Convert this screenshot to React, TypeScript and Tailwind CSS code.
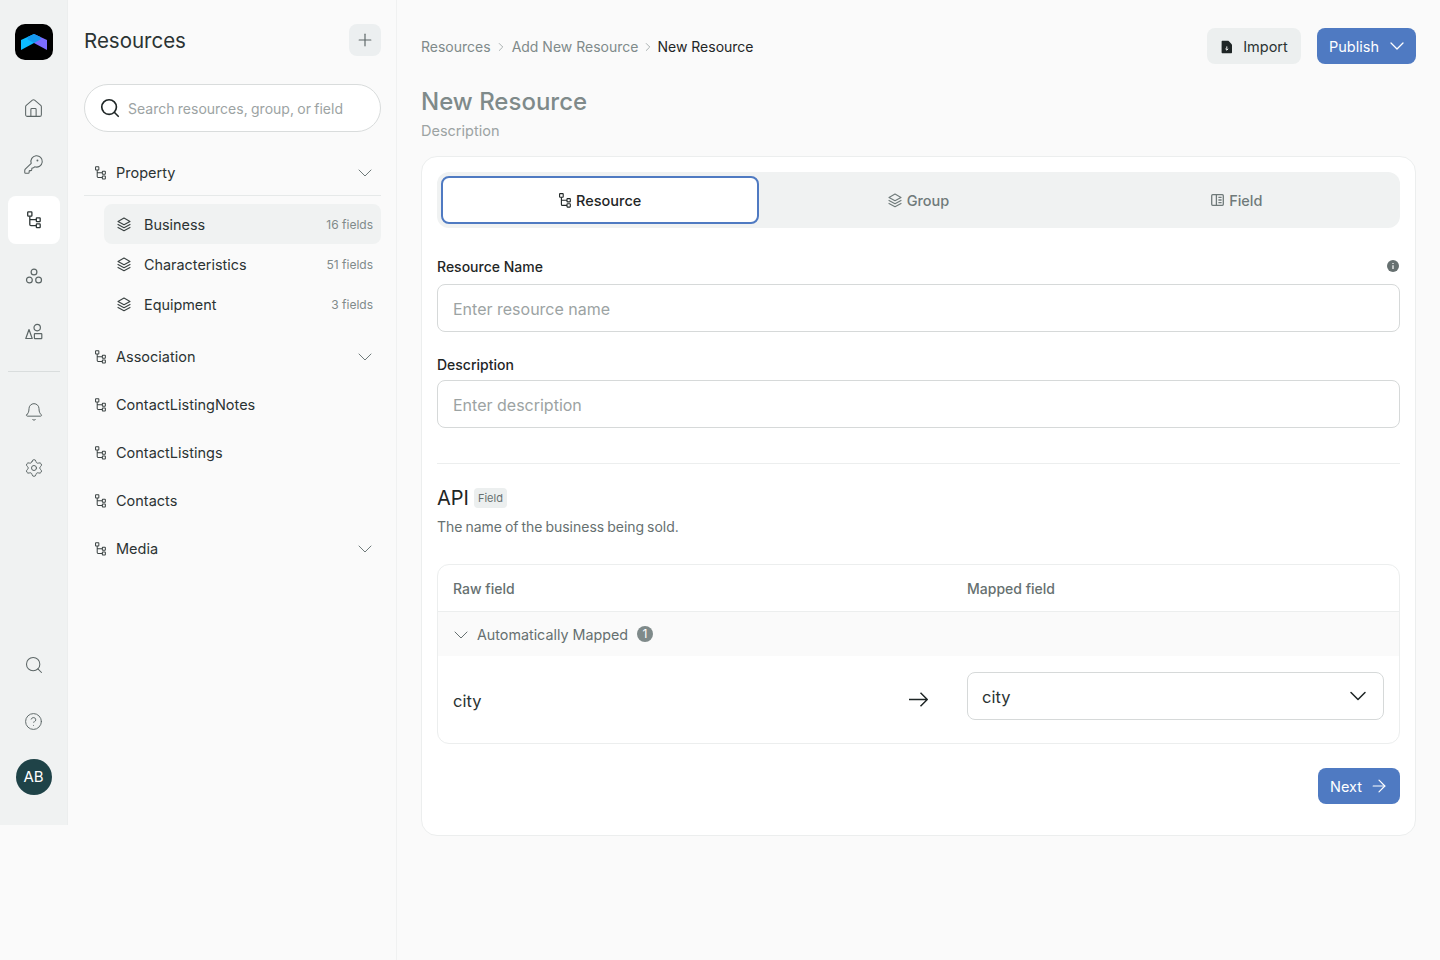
import React from 'react';
import { House, KeyRound, Bell, Settings, Search, CircleHelp, ChevronDown, ChevronRight, Plus, ArrowRight } from 'lucide-react';

const TreeIcon: React.FC<{ className?: string }> = ({ className }) => (
    <svg viewBox="0 0 12 15" fill="none" stroke="currentColor" strokeWidth="1.1" className={className}>
        <rect x="0.6" y="0.6" width="3.6" height="3.6" rx="0.5" />
        <rect x="8" y="5.6" width="3.3" height="3.3" rx="0.5" />
        <rect x="8" y="10.8" width="3.3" height="3.3" rx="0.5" />
        <path d="M2.4 4.2V11.4C2.4 12 2.8 12.4 3.4 12.4H8M2.4 7.2H8" />
    </svg>
);

const LayersIcon = () => (
    <svg viewBox="0 0 14 15" fill="none" stroke="currentColor" strokeWidth="1.1" strokeLinejoin="round" strokeLinecap="round" className="w-[14px] h-[15px] shrink-0">
        <path d="M7 1 13 4.4 7 7.8 1 4.4Z" />
        <path d="M1 7.4 7 10.8 13 7.4" />
        <path d="M1 10.4 7 13.8 13 10.4" />
    </svg>
);

const CirclesIcon = () => (
    <svg viewBox="0 0 18 18" fill="none" stroke="currentColor" strokeWidth="1.2" className="w-[18px] h-[18px]">
        <circle cx="9" cy="5" r="2.9" />
        <circle cx="4.4" cy="13" r="2.9" />
        <circle cx="13.6" cy="13" r="2.9" />
    </svg>
);

const ShapesIcon = () => (
    <svg viewBox="0 0 18 18" fill="none" stroke="currentColor" strokeWidth="1.2" strokeLinejoin="round" className="w-[18px] h-[18px]">
        <path d="M4 6.5 7.2 15.5H0.8Z" />
        <circle cx="12.2" cy="4.6" r="3.2" />
        <rect x="9.4" y="10.6" width="7.4" height="5" rx="0.6" />
    </svg>
);

const FieldIcon = () => (
    <svg viewBox="0 0 13 12" fill="none" stroke="currentColor" strokeWidth="1.3" className="w-[13px] h-[12px]">
        <rect x="0.7" y="0.7" width="11.6" height="10.6" rx="1" />
        <path d="M5.4 0.7V11.3M7.4 3.4H10.6M7.4 6H10.6M7.4 8.6H10.6" />
    </svg>
);

const ImportIcon = () => (
    <svg viewBox="0 0 14 14" className="w-[14px] h-[14px]">
        <path fill="#1f2626" d="M2.6 0.8H8.4L12 4.4V12.2C12 12.8 11.6 13.2 11 13.2H2.6C2 13.2 1.6 12.8 1.6 12.2V1.8C1.6 1.2 2 0.8 2.6 0.8Z" />
        <path fill="none" stroke="#eef0f0" strokeWidth="1" d="M6.8 6.4V10M5.4 8.8 6.8 10.2 8.2 8.8" />
    </svg>
);

// long arrow used between raw and mapped field
const LongArrow = () => (
    <svg viewBox="0 0 19 15" fill="none" stroke="#1f2626" strokeWidth="1.5" className="w-[19px] h-[15px]">
        <path d="M0 7.5H18M11.5 0.7 18.3 7.5 11.5 14.3" />
    </svg>
);

const Logo = () => (
    <div className="w-[38px] h-[36px] rounded-[10px] bg-black flex items-center justify-center">
        <svg viewBox="0 0 26 16" className="w-[26px] h-[16px]">
            <path fill="#0cbcff" d="M0 6 13 0V9L0 16Z" />
            <path fill="#7b6cff" d="M26 6 13 0V9L26 16Z" />
            <path fill="#1499ef" d="M6.5 3 13 0 19.5 3 19.5 5.5 13 9 6.5 5.5Z" />
        </svg>
    </div>
);

const Rail: React.FC = () => (
    <div className="w-[68px] h-[825px] shrink-0 bg-[#f0f2f2] border-r border-[#eceeee] flex flex-col items-center pt-6 text-[#5c6666]">
        <Logo />
        <div className="flex flex-col items-center w-full mt-[20px]">
            <div className="h-14 w-[52px] flex items-center justify-center"><House size={21} strokeWidth={1.2} /></div>
            <div className="h-14 w-[52px] flex items-center justify-center"><KeyRound size={21} strokeWidth={1.2} /></div>
            <div className="h-12 w-[52px] my-1 rounded-lg bg-white flex items-center justify-center text-[#2c3434]"><TreeIcon className="w-[14px] h-[18px]" /></div>
            <div className="h-14 w-[52px] flex items-center justify-center"><CirclesIcon /></div>
            <div className="h-14 w-[52px] flex items-center justify-center"><ShapesIcon /></div>
            <div className="w-[52px] h-px bg-[#d9dddd] mt-[11px] mb-[12px]" />
            <div className="h-14 w-[52px] flex items-center justify-center"><Bell size={20} strokeWidth={1.2} /></div>
            <div className="h-14 w-[52px] flex items-center justify-center"><Settings size={20} strokeWidth={1.2} /></div>
        </div>
        <div className="mt-auto flex flex-col items-center pb-[30px]">
            <div className="h-14 w-[52px] flex items-center justify-center"><Search size={20} strokeWidth={1.25} /></div>
            <div className="h-14 w-[52px] flex items-center justify-center"><CircleHelp size={19} strokeWidth={1.2} /></div>
            <div className="mt-[10px] w-9 h-9 rounded-full bg-[#1f4348] text-white text-[15px] flex items-center justify-center">AB</div>
        </div>
    </div>
);

const ResourceRow: React.FC<{ name: string; expandable?: boolean; border?: boolean }> = ({ name, expandable, border }) => (
    <div className={`h-12 flex items-center pt-0.5 pl-[11px] pr-1 text-[#2b3333] ${border ? 'border-b border-[#e6e9e9]' : ''}`}>
        <TreeIcon className="w-[11px] h-[14px] text-[#3a4242]" />
        <span className="ml-[10px] text-[14.5px]">{name}</span>
        {expandable && <ChevronDown size={24} strokeWidth={1} className="ml-auto text-[#6f7a7a]" />}
    </div>
);

const SubRow: React.FC<{ name: string; count: string; active?: boolean }> = ({ name, count, active }) => (
    <div className={`h-10 flex items-center pl-[13px] pr-2 rounded-lg ${active ? 'bg-[#f0f2f2]' : ''}`}>
        <span className="text-[#3a4242]"><LayersIcon /></span>
        <span className="ml-[13px] pt-0.5 text-[14.4px] text-[#2b3333]">{name}</span>
        <span className="ml-auto pt-0.5 text-[12px] text-[#7f8a8a]">{count}</span>
    </div>
);

const ResourcesPanel: React.FC = () => (
    <div className="w-[329px] shrink-0 min-h-[960px] border-r border-[#f0f1f1] pl-4 pr-[15px] pt-6">
        <div className="flex items-center justify-between h-8">
            <h2 className="pt-0.5 text-[20.5px] text-[#2b3333]">Resources</h2>
            <button className="w-8 h-8 rounded-lg bg-[#eceff0] flex items-center justify-center text-[#5c6666]">
                <Plus size={20} strokeWidth={1.4} />
            </button>
        </div>
        <div className="mt-7 h-12 rounded-full bg-white border border-[#d9dcdc] flex items-center pl-[14px]">
            <Search size={22} strokeWidth={1.8} className="text-[#1f2626]" />
            <span className="ml-[7px] text-[14px] pt-px text-[#9ca3a3] [word-spacing:-0.6px]">Search resources, group, or field</span>
        </div>
        <div className="mt-4">
            <ResourceRow name="Property" expandable border />
            <div className="pl-5 pt-2 pb-2">
                <SubRow name="Business" count="16 fields" active />
                <SubRow name="Characteristics" count="51 fields" />
                <SubRow name="Equipment" count="3 fields" />
            </div>
            <ResourceRow name="Association" expandable />
            <ResourceRow name="ContactListingNotes" />
            <ResourceRow name="ContactListings" />
            <ResourceRow name="Contacts" />
            <ResourceRow name="Media" expandable />
        </div>
    </div>
);

const Tab: React.FC<{ label: string; icon: React.ReactNode; active?: boolean }> = ({ label, icon, active }) => (
    <div className={`w-1/3 h-12 flex items-center justify-center gap-[5px] text-[14.5px] font-medium rounded-lg ${active ? 'bg-white border-2 border-[#4f7ac2] text-[#1f2626]' : 'text-[#6f7a7a]'}`}>
        {icon}
        <span className="pt-0.5">{label}</span>
    </div>
);

const Field: React.FC<{ label: string; placeholder: string; info?: boolean; gap: string }> = ({ label, placeholder, info, gap }) => (
    <div>
        <div className={`flex items-center justify-between h-4 ${gap}`}>
            <label className="pb-0.5 text-[14px] font-medium text-[#1f2626]">{label}</label>
            {info && (
                <svg viewBox="0 0 12 12" className="w-3 h-3 mr-px -mt-0.5">
                    <circle cx="6" cy="6" r="6" fill="#667070" />
                    <path d="M6 5.2V9M6 3V4" stroke="#fff" strokeWidth="1.2" />
                </svg>
            )}
        </div>
        <div className="h-12 pt-0.5 rounded-lg border border-[#d6d9d9] bg-white flex items-center px-[15px] text-[16px] text-[#9ca3a3]">{placeholder}</div>
    </div>
);

const MappingTable: React.FC = () => (
    <div className="mt-[27px] rounded-xl border border-[#eceeee] overflow-hidden">
        <div className="h-[47px] flex items-center border-b border-[#eceeee] px-[15px] text-[14px] font-medium text-[#667070]">
            <span className="w-[514px]">Raw field</span>
            <span>Mapped field</span>
        </div>
        <div className="h-[44px] pt-0.5 bg-[#fafafa] flex items-center pl-[11px] text-[14.3px] text-[#667070]">
            <ChevronDown size={24} strokeWidth={1} />
            <span className="ml-1">Automatically Mapped</span>
            <span className="ml-[9px] -mt-0.5 w-4 h-4 rounded-full bg-[#7f8a8a] text-white text-[12px] flex items-center justify-center">1</span>
        </div>
        <div className="h-[87px] flex items-start px-[15px] pt-4">
            <span className="w-[456px] mt-[17px] text-[16.5px] text-[#2b3333]">city</span>
            <div className="mt-5"><LongArrow /></div>
            <div className="ml-[39px] w-[417px] h-12 rounded-lg border border-[#d6d9d9] flex items-center justify-between pl-[14px] pr-[11px] text-[16.5px] text-[#2b3333]">
                <span className="pt-[3px]">city</span>
                <ChevronDown size={28} strokeWidth={1.3} className="text-[#1f2626]" />
            </div>
        </div>
    </div>
);

const App: React.FC = () => {
    return (
        <div className="flex min-h-[960px] bg-[#fafafa] font-['Inter',sans-serif]">
            <Rail />
            <ResourcesPanel />
            <main className="flex-1 min-w-0 px-6 pt-7">
                <div className="flex items-center h-9">
                    <nav className="flex items-center pt-px text-[14px] text-[#7f8a8a]">
                        <span>Resources</span>
                        <ChevronRight size={14} strokeWidth={1.1} className="mx-[3.5px]" />
                        <span>Add New Resource</span>
                        <ChevronRight size={14} strokeWidth={1.1} className="mx-[2.5px]" />
                        <span className="text-[#1f2626]">New Resource</span>
                    </nav>
                    <button className="ml-auto h-9 w-[94px] pt-0.5 rounded-lg bg-[#ecefef] flex items-center justify-center gap-[9px] text-[14.5px] text-[#2b3333]">
                        <ImportIcon />
                        Import
                    </button>
                    <button className="ml-4 h-9 w-[99px] pl-3 rounded-lg bg-[#4f7ac2] flex items-center gap-[6px] text-[14.5px] text-white">
                        <span className="pt-0.5">Publish</span>
                        <ChevronDown size={24} strokeWidth={1.3} />
                    </button>
                </div>
                <h1 className="mt-5 text-[24px] leading-[36px] font-medium text-[#7f8a8a]">New Resource</h1>
                <p className="mt-px text-[14.5px] leading-5 text-[#9ca3a3]">Description</p>
                <section className="mt-[15px] h-[680px] rounded-2xl border border-[#eceeee] bg-white p-[15px]">
                    <div className="h-14 rounded-xl bg-[#f0f2f2] p-1 flex">
                        <Tab label="Resource" active icon={<TreeIcon className="w-[12px] h-[15px]" />} />
                        <Tab label="Group" icon={<LayersIcon />} />
                        <Tab label="Field" icon={<FieldIcon />} />
                    </div>
                    <div className="mt-[31px]">
                        <Field label="Resource Name" placeholder="Enter resource name" info gap="mb-[9px]" />
                    </div>
                    <div className="mt-[25px]">
                        <Field label="Description" placeholder="Enter description" gap="mb-[7px]" />
                    </div>
                    <div className="mt-[35px] h-px bg-[#eceeee]" />
                    <div className="mt-[23px] flex items-center h-[22px]">
                        <span className="text-[20px] text-[#1f2626]">API</span>
                        <span className="ml-[5px] h-5 px-1 rounded bg-[#ecefef] text-[11px] text-[#667070] flex items-center">Field</span>
                    </div>
                    <p className="mt-2 text-[14px] leading-5 text-[#667070] [word-spacing:-1px]">The name of the business being sold.</p>
                    <MappingTable />
                    <div className="mt-6 flex justify-end">
                        <button className="h-9 w-[82px] pl-3 rounded-lg bg-[#4f7ac2] text-white text-[14.5px] flex items-center gap-[7px]">
                            <span className="pt-0.5">Next</span>
                            <ArrowRight size={20} strokeWidth={1.4} />
                        </button>
                    </div>
                </section>
            </main>
        </div>
    );
};

export default App;
